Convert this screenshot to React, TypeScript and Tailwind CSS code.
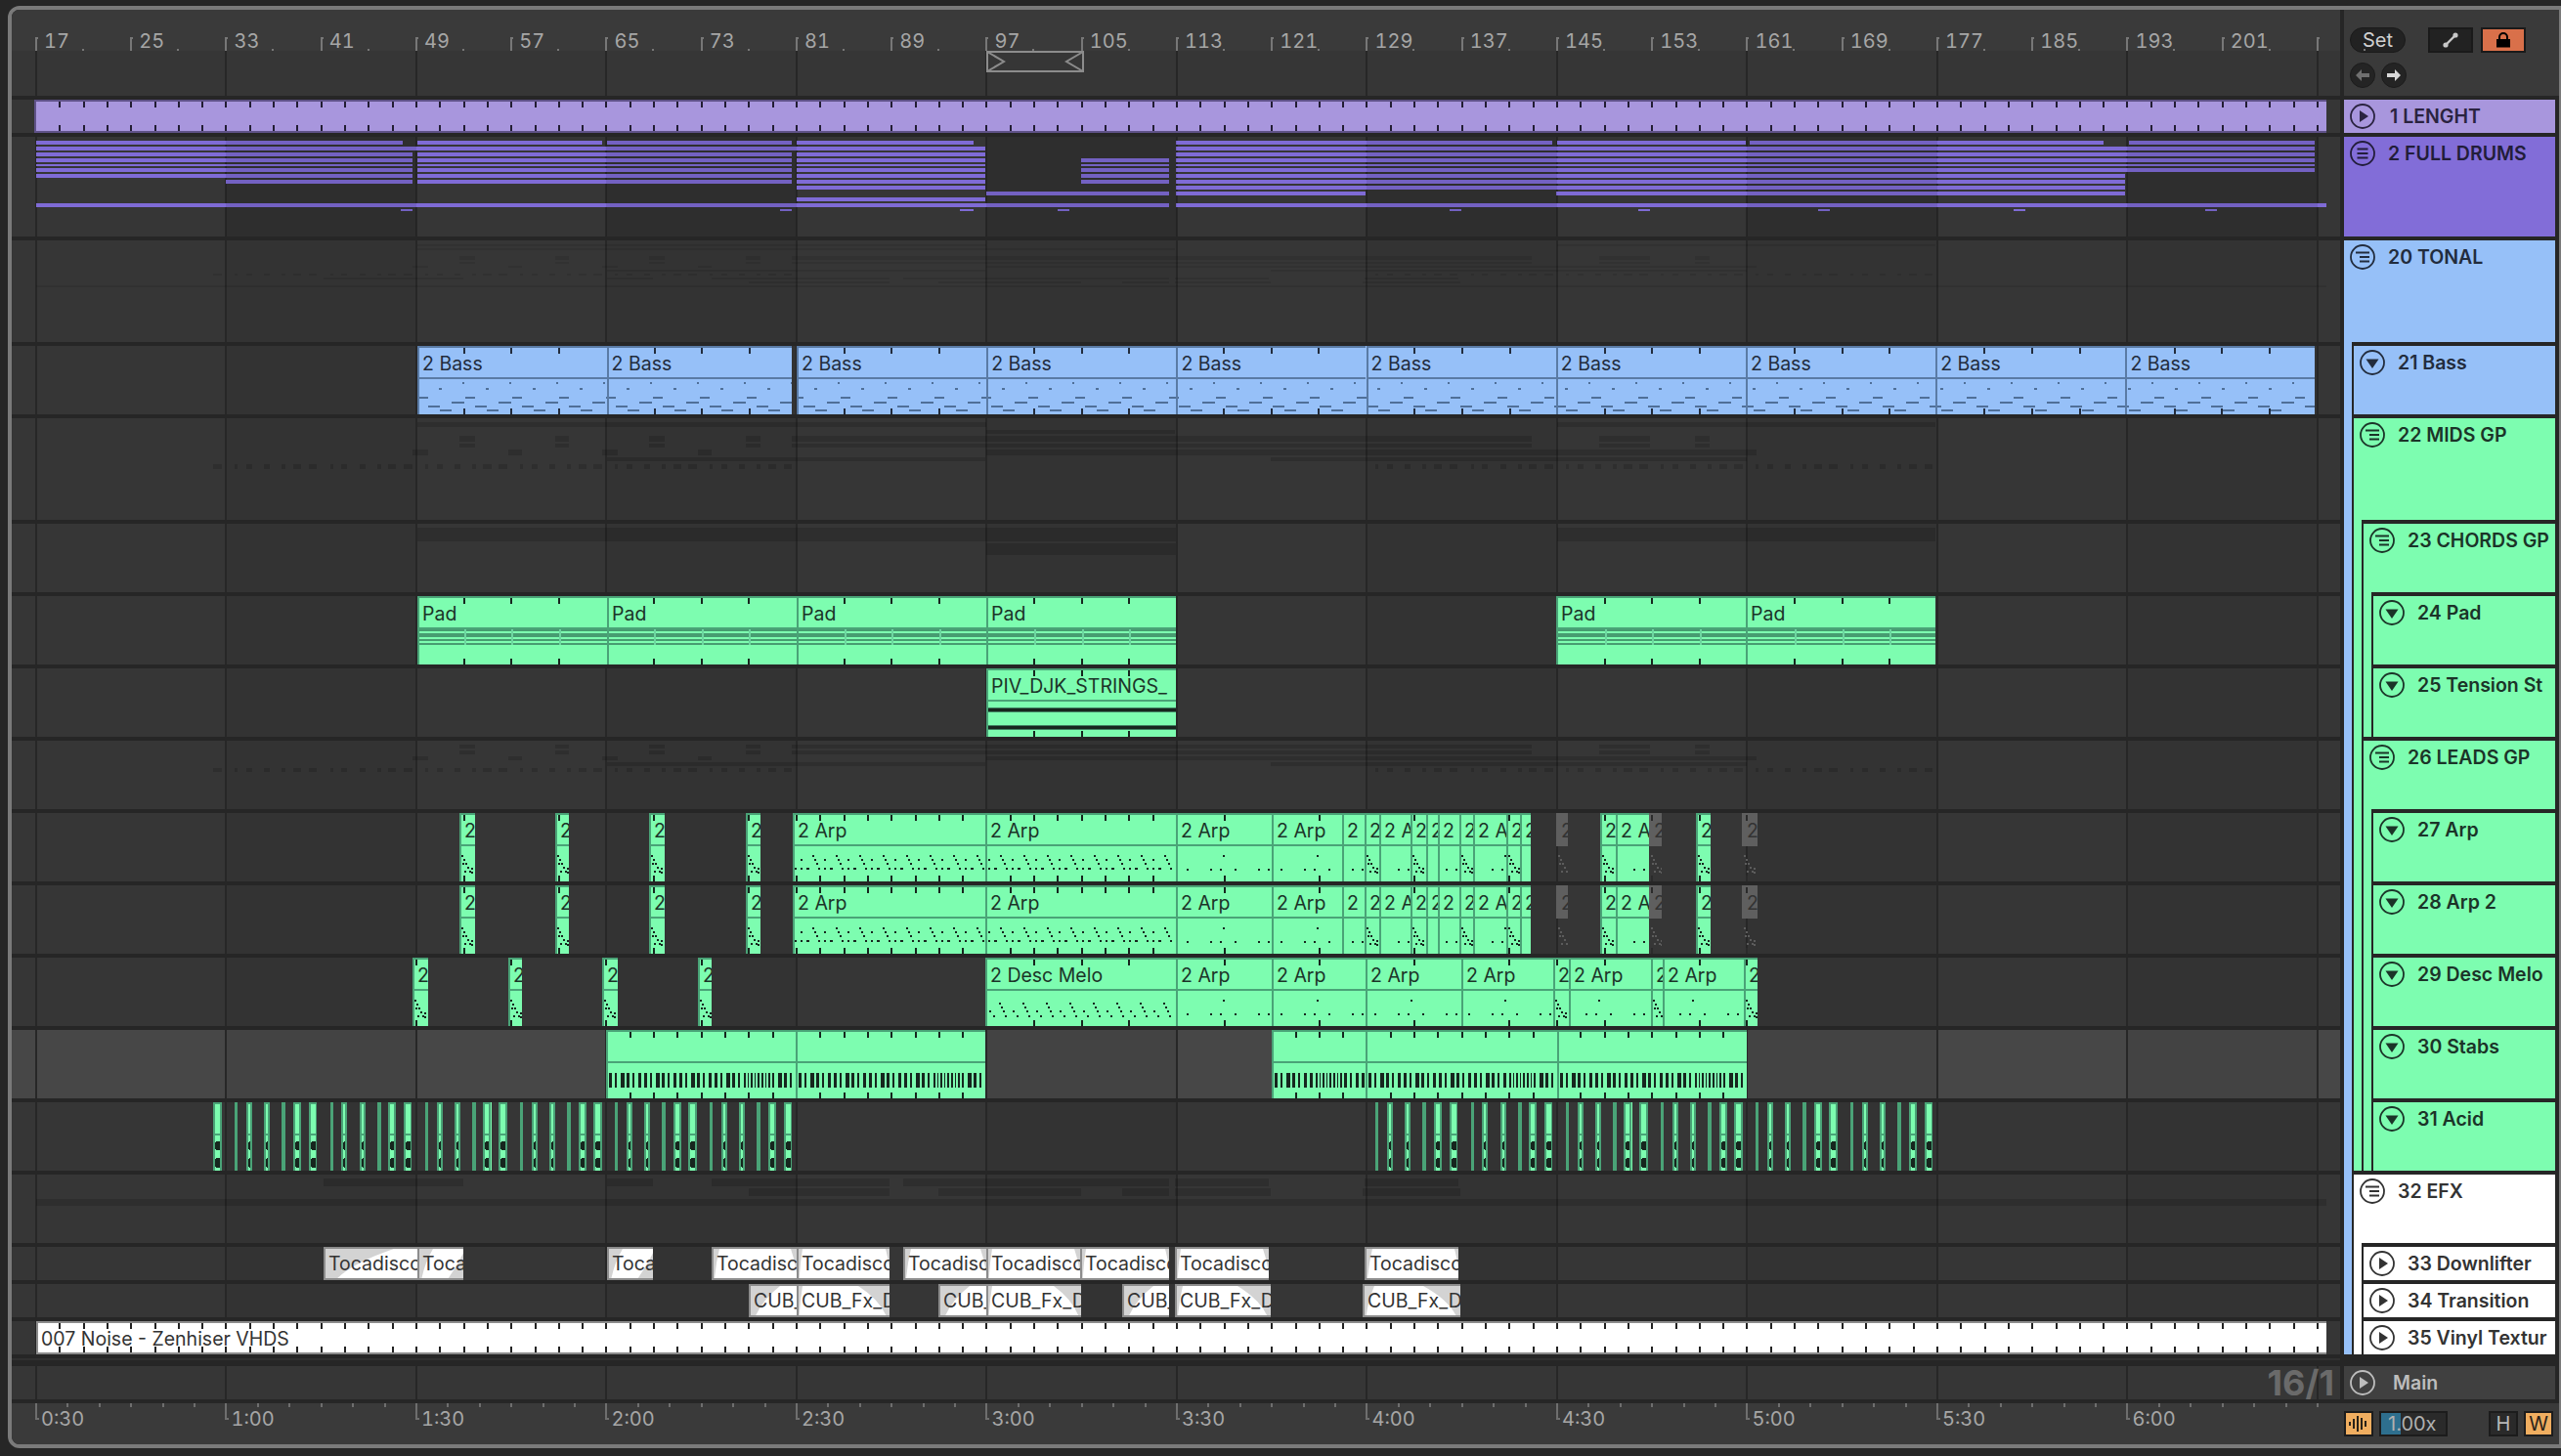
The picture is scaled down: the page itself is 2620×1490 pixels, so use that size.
import React from "react";

const X = (b: number) => 37 + (b - 17) * 12.156;
const range = (a: number, b: number, s: number) => {
  const out: number[] = [];
  for (let v = a; v < b; v += s) out.push(v);
  return out;
};
const SEC = 16 * 12.156;

type Span = [number, number];

const acidBase: Span[] = [[0, 8.7], [22, 25], [33.7, 39.8], [52, 58], [70, 74], [81.6, 89.8]];
const acidSpans = (from: number, to: number, min: number) => {
  const out: Span[] = [];
  for (let s = from; s < to; s += 97.2) {
    for (const [a, b] of acidBase) {
      if (s + b <= to && s + a >= min) out.push([s + a, s + b]);
    }
  }
  return out;
};
const allAcid = [...acidSpans(218.4, 814, 0), ...acidSpans(1385.4, 1982, 1406)];

const THEMES = {
  purple: { bg: "bg-[#a896dd]", text: "text-[#2a2340]", border: "#5f5288", ink: "#221d33", note: "#221d33", sep: "#5f5288" },
  blue: { bg: "bg-[#96c0f8]", text: "text-[#222c3d]", border: "#5a7ba5", ink: "#222c3d", note: "#4f6f98", sep: "#5a7ba5" },
  green: { bg: "bg-[#7dfdb0]", text: "text-[#1b3428]", border: "#4aa377", ink: "#16261e", note: "#16261e", sep: "#4aa377" },
  grey: { bg: "bg-transparent", text: "text-[#333333]", border: "#5f5f5f", ink: "#2b2b2b", note: "#5c5c5c", sep: "#5f5f5f" },
  white: { bg: "bg-[#ffffff]", text: "text-[#333333]", border: "#8c8c8c", ink: "#222222", note: "#222222", sep: "#8c8c8c" },
};
type ThemeKey = keyof typeof THEMES;

function Notes({ kind, x0, x1, h, color }: { kind: string; x0: number; x1: number; h: number; color: string }) {
  const w = x1 - x0;
  const out: React.ReactNode[] = [];
  const rect = (x: number, y: number, rw: number, rh: number, fill = color) =>
    out.push(<rect key={out.length} x={x} y={y} width={rw} height={rh} fill={fill} />);
  if (kind === "bass") {
    for (const s of range(427 - 48 * 12, x1, 48)) {
      const o = s - x0;
      rect(o + 46, 37, 2, 2);
      rect(o + 22, 43, 3, 2);
      rect(o + 1, 52, 10, 2);
      rect(o + 35, 57, 13, 2);
      rect(o + 11, 61, 12, 2);
      rect(o + 23, 65, 12, 2);
    }
  }
  if (kind === "dense") {
    for (const s of range(811 - 24 * 20, x1, 24)) {
      const o = s - x0;
      rect(o + 20, 43, 2, 2);
      rect(o + 22, 47, 2, 2);
      rect(o + 8, 47, 2, 2);
      rect(o + 0, 51, 2, 2);
      rect(o + 2, 56, 2, 2);
      rect(o + 8, 56, 2, 2);
      rect(o + 14, 56, 3, 2);
    }
  }
  if (kind === "melo") {
    for (const s of range(1008 - 24, x1, 24)) {
      const o = s - x0;
      rect(o + 14, 46, 2, 2);
      rect(o + 16, 50, 2, 2);
      rect(o + 18, 54, 2, 2);
      rect(o + 4, 54, 2, 2);
      rect(o + 20, 59, 2, 2);
      rect(o + 8, 59, 2, 2);
    }
  }
  if (kind === "sparse") {
    for (const s of range(1203 - 96, x1, 96)) {
      const o = s - x0;
      rect(o + 48, 43, 2, 2);
      for (const d of [11, 35, 45, 60, 84, 94]) rect(o + d, 57, 2, 2);
    }
  }
  if (kind === "tiny") {
    const pts = [[2, 43], [4, 47], [6, 51], [8, 55], [10, 59], [3, 51], [5, 59], [12, 56], [12, 60]];
    pts.forEach(([a, b]) => rect(a, b, 2, 2));
  }
  if (kind === "pad") {
    rect(0, 32, w, 4, "#479c71");
    rect(0, 38, w, 4, "#479c71");
    rect(0, 44, w, 2, "#479c71");
    rect(0, 48, w, 2, "#479c71");
    for (const b of range(17, 209, 4)) {
      const x = X(b) - x0;
      if (x > 4 && x < w - 1) rect(x, 34, 2, 16, "#6dd6a0");
    }
  }
  if (kind === "strings") {
    rect(0, 40, w, 5, "#3f7f60");
    rect(0, 41, w, 3, "#16261e");
    rect(0, 58, w, 5, "#3f7f60");
    rect(0, 59, w, 3, "#16261e");
  }
  if (kind === "stabs") {
    let x = 3;
    let i = 0;
    while (x < w - 2) {
      const abs = x + x0;
      const inFine = (abs - 620) % 194.5 > 140 && (abs - 620) % 194.5 < 168;
      const bw = inFine ? 1.5 : [3, 2, 4, 3, 2, 3][i % 6];
      rect(x, 44, bw, 15, "#16261e");
      x += inFine ? 3.6 : 6;
      i++;
    }
  }
  if (kind === "acid" && w > 5) {
    const bw = Math.max(3, w * 0.68);
    const bx = 2;
    out.push(<rect key="a" x={bx} y={40} width={bw} height={9} rx={2.5} fill="#16261e" />);
    out.push(<rect key="b" x={bx} y={57} width={bw} height={10} rx={2.5} fill="#16261e" />);
  }
  return <>{out}</>;
}

function Clip({
  x0, x1, label, theme, kind = "none", tick = 2, h = 70, header = true, bottom = false,
}: {
  x0: number; x1: number; label?: string; theme: ThemeKey; kind?: string; tick?: number; h?: number; header?: boolean; bottom?: boolean;
}) {
  const t = THEMES[theme];
  const w = x1 - x0;
  const ticks = tick > 0 ? range(17, 213, tick).map(X).filter((v) => v > x0 + 3 && v < x1 - 1) : [];
  return (
    <div className={`absolute top-0 bottom-0 overflow-hidden ${t.bg}`} style={{ left: x0 - 12, width: w }}>
      <svg className="absolute inset-0" width={w} height={h} shapeRendering="crispEdges">
        {theme === "grey" && <rect x={0} y={0} width={w} height={34} fill="#5f5f5f" />}
        <Notes kind={kind} x0={x0} x1={x1} h={h} color={t.note} />
        {theme !== "grey" && <rect x={0} y={0} width={w} height={2} fill={t.border} />}
        {theme !== "grey" && <rect x={0} y={0} width={2} height={h} fill={t.border} />}
        {kind === "acid" && <rect x={w - 2} y={0} width={2} height={h} fill={t.border} />}
        {header && theme !== "grey" && <rect x={0} y={32} width={w} height={2} fill={t.sep} />}
        {bottom && <rect x={0} y={h - 2} width={w} height={2} fill={t.border} />}
        {ticks.map((v) => (
          <g key={v}>
            <rect x={v - x0 - 1} y={2} width={2} height={6} fill={t.ink} />
            <rect x={v - x0 - 1} y={h - (bottom ? 8 : 6)} width={2} height={6} fill={t.ink} />
          </g>
        ))}
      </svg>
      {label && (
        <div className={`absolute left-[5px] top-0 text-[19.5px] leading-[36px] whitespace-nowrap ${t.text}`}>{label}</div>
      )}
    </div>
  );
}

function AudioClip({ x0, x1, label, fadeIn, fadeOut, low }: { x0: number; x1: number; label: string; fadeIn: number; fadeOut: number; low?: boolean }) {
  const w = x1 - x0;
  const h = 34;
  return (
    <div className="absolute top-0 bottom-0 overflow-hidden bg-[#ffffff] border-t-2 border-l-2 border-b-2 border-[#8c8c8c]" style={{ left: x0 - 12, width: w }}>
      <svg className="absolute inset-0" width={w} height={h}>
        <path d={`M0 0 L${fadeIn} 0 Q${fadeIn * 0.35} ${h * 0.45} ${fadeIn * 0.12} ${h} L0 ${h} Z`} fill="#d3d3d3" />
        {low ? (
          <path d={`M${w} ${h} L${w - fadeOut} ${h} Q${w - fadeOut * 0.35} ${h * 0.45} ${w} 0 Z`} fill="#d3d3d3" />
        ) : (
          <path d={`M${w - fadeOut} 0 L${w} 0 L${w} ${h} L${w - fadeOut * 0.12} ${h} Q${w - fadeOut * 0.3} ${h * 0.45} ${w - fadeOut} 0 Z`} fill="#d3d3d3" />
        )}
      </svg>
      <div className="absolute left-[3px] top-0 text-[19.5px] leading-[30px] whitespace-nowrap text-[#333333]">{label}</div>
    </div>
  );
}

function Ghost({ rows, h, color = "#000000", opacity = 0.14 }: { rows: [number, number, Span[]][]; h: number; color?: string; opacity?: number }) {
  return (
    <svg className="absolute inset-0" width={2382} height={h} shapeRendering="crispEdges">
      {rows.map(([y, rh, spans], i) =>
        spans.map(([a, b], j) => <rect key={`${i}-${j}`} x={a - 12} y={y} width={b - a} height={rh} fill={color} fillOpacity={opacity} />),
      )}
    </svg>
  );
}

const sections = range(0, 12, 1);

function Lane({ h, light, children }: { h: number; light?: boolean; children?: React.ReactNode }) {
  return (
    <div className={`relative overflow-hidden ${light ? "bg-[#474747]" : "bg-[#363636]"}`} style={{ height: h }}>
      {sections.filter((k) => k % 2 === 1).map((k) => (
        <div key={k} className="absolute top-0 bottom-0 bg-[#000000]/5" style={{ left: X(17 + k * 16) - 12, width: SEC }} />
      ))}
      {sections.concat([12]).map((k) => (
        <div key={k} className="absolute top-0 bottom-0 w-[2px] bg-[#272727]" style={{ left: X(17 + k * 16) - 13 }} />
      ))}
      {children}
    </div>
  );
}

function Icon({ type }: { type: "play" | "menu" | "group" | "down" }) {
  return (
    <svg width={26} height={26} viewBox="0 0 26 26" className="shrink-0" fill="none" stroke="currentColor" strokeWidth={1.8}>
      <circle cx={13} cy={13} r={12} />
      {type === "play" && <path d="M10 7 L19 13 L10 19 Z" fill="currentColor" stroke="none" />}
      {type === "down" && <path d="M6.5 9.5 H19.5 L13 19 Z" fill="currentColor" stroke="none" />}
      {type === "menu" && (
        <g strokeWidth={2}>
          <path d="M7.5 8.5 H18.5" />
          <path d="M7.5 13 H18.5" />
          <path d="M7.5 17.5 H18.5" />
        </g>
      )}
      {type === "group" && (
        <g strokeWidth={2}>
          <path d="M6 8.5 H20" />
          <path d="M10 13 H20" />
          <path d="M10 17.5 H20" />
        </g>
      )}
    </svg>
  );
}

function Head({ label, icon, h, cls, textCls = "ml-[13px]" }: { label: string; icon: "play" | "menu" | "group" | "down"; h: number; cls: string; textCls?: string }) {
  return (
    <div className={`flex items-start pl-[6px] pt-[4px] overflow-hidden ${cls}`} style={{ height: h }}>
      <Icon type={icon} />
      <div className={`text-[19.5px] leading-[26px] font-semibold whitespace-nowrap ${textCls}`}>{label}</div>
    </div>
  );
}

const Kids = ({ children }: { children: React.ReactNode }) => (
  <div className="ml-[8px] border-l-2 border-[#262626] bg-[#262626] flex flex-col gap-[4px] pt-[4px]">{children}</div>
);

const BLUE = "bg-[#96c0f8] text-[#222c3d]";
const GREEN = "bg-[#7dfdb0] text-[#1b3428]";
const WHITE = "bg-[#ffffff] text-[#333333]";

const tinyArp: Span[] = [[470, 486], [568, 582], [664, 680], [763, 778]];
const tinyMelo: Span[] = [[422, 438], [520, 534], [616, 632], [714, 728]];
const toca: [number, number, number, number, boolean?][] = [
  [331, 427, 70, 0], [427, 474, 14, 20, true], [621, 668, 14, 20, true], [728, 815, 6, 8], [815, 910, 4, 6],
  [924, 1009, 6, 8], [1009, 1105, 4, 8], [1105, 1196, 4, 6], [1202, 1298, 4, 8], [1396, 1492, 6, 6],
];
const cub: [number, number, number, number, boolean?][] = [
  [766, 815, 30, 0], [815, 910, 4, 34], [960, 1009, 30, 0], [1009, 1106, 4, 30], [1148, 1196, 30, 0],
  [1202, 1300, 6, 36], [1394, 1494, 10, 40],
];
const tocaSpans: Span[] = toca.map((t) => [t[0], t[1]]);
const cubSpans: Span[] = cub.map((t) => [t[0], t[1]]);

const arpClips: [number, number, string, ThemeKey, string][] = [
  [470, 486, "2", "green", "tiny"], [568, 582, "2", "green", "tiny"], [664, 680, "2", "green", "tiny"], [763, 778, "2", "green", "tiny"],
  [811, 1008, "2 Arp", "green", "dense"], [1008, 1203, "2 Arp", "green", "dense"],
  [1203, 1301, "2 Arp", "green", "sparse"], [1301, 1373, "2 Arp", "green", "sparse"], [1373, 1396, "2", "green", "sparse"],
  [1396, 1411, "2", "green", "tiny"], [1411, 1443, "2 Arp", "green", "sparse"], [1443, 1459, "2", "green", "tiny"],
  [1459, 1471, "2", "green", "none"], [1471, 1493, "2", "green", "sparse"], [1493, 1507, "2", "green", "tiny"],
  [1507, 1541, "2 Arp", "green", "sparse"], [1541, 1555, "2", "green", "tiny"], [1555, 1566, "2", "green", "none"],
  [1592, 1604, "2", "grey", "tiny"], [1637, 1653, "2", "green", "tiny"], [1653, 1687, "2 Arp", "green", "sparse"],
  [1687, 1700, "2", "grey", "tiny"], [1735, 1750, "2", "green", "tiny"], [1782, 1798, "2", "grey", "tiny"],
];
const meloClips: [number, number, string, string][] = [
  [422, 438, "2", "tiny"], [520, 534, "2", "tiny"], [616, 632, "2", "tiny"], [714, 728, "2", "tiny"],
  [1008, 1203, "2 Desc Melo", "melo"], [1203, 1301, "2 Arp", "sparse"], [1301, 1397, "2 Arp", "sparse"], [1397, 1495, "2 Arp", "sparse"],
  [1495, 1589, "2 Arp", "sparse"], [1589, 1605, "2", "tiny"], [1605, 1689, "2 Arp", "sparse"], [1689, 1701, "2", "tiny"],
  [1701, 1784, "2 Arp", "sparse"], [1784, 1798, "2", "tiny"],
];

const D: [number, number, Span[]][] = [
  [4, 4, [[37, 412], [427, 616], [621, 810], [815, 996], [1203, 1588], [1593, 1786], [1790, 2152], [2178, 2368]]],
  [10, 4, [[37, 1008], [1203, 2368]]],
  [16, 4, [[37, 422], [427, 810], [815, 1008], [1203, 2368]]],
  [22, 4, [[37, 422], [427, 810], [815, 1008], [1106, 1196], [1203, 2368]]],
  [28, 2, [[37, 422], [427, 810], [815, 1008], [1106, 1196], [1203, 2368]]],
  [32, 4, [[37, 422], [427, 810], [815, 1008], [1106, 1196], [1203, 2368]]],
  [38, 4, [[37, 422], [427, 810], [815, 1008], [1106, 1196], [1203, 2174]]],
  [44, 4, [[231, 422], [427, 810], [815, 1008], [1106, 1196], [1203, 2174]]],
  [50, 4, [[815, 1008], [1203, 2174]]],
  [56, 4, [[1009, 1196], [1203, 1397], [1592, 2174]]],
  [62, 4, [[815, 1008]]],
  [68, 4, [[37, 1196], [1203, 2380]]],
  [74, 2, [[410, 422], [798, 810], [982, 996], [1082, 1094], [1483, 1495], [1676, 1688], [1860, 1872], [2060, 2072], [2256, 2268]]],
];

const midsRows: [number, number, Span[]][] = [
  [4, 5, [[427, 1009], [1593, 1980]]],
  [12, 4, [[1009, 1202]]],
  [18, 6, [...tinyArp, [810, 1567], [1636, 1688], [1734, 1749]]],
  [26, 4, [...tinyArp, [810, 1567], [1636, 1688], [1734, 1749]]],
  [32, 6, [...tinyMelo, [1009, 1797]]],
  [40, 4, [[621, 1008], [1300, 1787]]],
  [47, 5, allAcid],
];
const chordsRows: [number, number, Span[]][] = [
  [4, 14, [[427, 1203], [1593, 1980]]],
  [20, 12, [[1009, 1203]]],
];
const leadsRows: [number, number, Span[]][] = [
  [4, 4, [...tinyArp, [810, 1567], [1636, 1688], [1734, 1749]]],
  [10, 4, [...tinyArp, [810, 1567], [1636, 1688], [1734, 1749]]],
  [16, 4, [...tinyMelo, [1009, 1797]]],
  [22, 4, [[621, 1008], [1300, 1787]]],
  [28, 4, allAcid],
];
const tonalRows: [number, number, Span[]][] = [
  [4, 2, [[427, 1009], [1593, 1980]]],
  [8, 2, [[427, 1202]]],
  [16, 4, [...tinyArp, [810, 1567], [1636, 1688], [1734, 1749]]],
  [22, 2, [...tinyArp, [810, 1567], [1636, 1688], [1734, 1749]]],
  [26, 2, [...tinyMelo, [1009, 1797]]],
  [30, 2, [[621, 1008], [1300, 1787]]],
  [34, 2, allAcid],
  [38, 2, tocaSpans],
  [42, 2, cubSpans],
  [46, 2, [[37, 2380]]],
];

const Circ = ({ children }: { children: React.ReactNode }) => (
  <div className="w-[26px] h-[26px] rounded-full bg-[#242424] border border-[#1c1c1c] flex items-center justify-center">{children}</div>
);

export default function App() {
  const bass = [427, 620.6, 810];
  const bassRest = range(0, 8, 1).map((k) => 815 + k * 194.2);
  const padX: Span[] = [[427, 621], [621, 815], [815, 1009], [1009, 1203], [1592, 1786], [1786, 1980]];
  const stabs: Span[] = [[620, 814], [814, 1008], [1301, 1397], [1397, 1593], [1593, 1787]];
  return (
    <div className="w-[2620px] h-[1490px] bg-[#262626] overflow-hidden pt-[6px] pl-[8px] [font-family:Inter,sans-serif] select-none">
      <div className="w-[2614px] h-[1476px] border-4 border-[#7a7a7a] rounded-l-[12px] bg-[#262626] overflow-hidden flex flex-col">
        {/* top ruler + controls */}
        <div className="flex h-[88px] gap-[4px] shrink-0">
          <div className="w-[2382px] relative bg-[#363636]">
            <div className="h-[42px] bg-[#3a3a3a] relative" />
            {sections.concat([12]).map((k) => (
              <div key={k} className="absolute top-[42px] bottom-0 w-[2px] bg-[#272727]" style={{ left: X(17 + k * 16) - 13 }} />
            ))}
            {range(17, 210, 8).map((b) => (
              <div key={b} className="absolute top-[20px]" style={{ left: X(b) - 13 }}>
                <div className="absolute top-[8px] left-0 w-[2px] h-[14px] bg-[#777777]" />
                <div className="absolute top-[8px] left-0 w-[3px] h-[2px] bg-[#777777]" />
                {b < 209 && (
                  <div className="absolute left-[9px] top-0 text-[20px] leading-[24px] tabular-nums text-[#a6a6a6]">{b}</div>
                )}
                <div className="absolute top-[20px] w-[2px] h-[2px] bg-[#777777]" style={{ left: 48 }} />
              </div>
            ))}
            <svg className="absolute" style={{ left: X(97) - 12, top: 42 }} width={100} height={22} fill="none" stroke="#8c8c8c" strokeWidth={2}>
              <rect x={1} y={1} width={98} height={20} />
              <path d="M1 1 L18 11 L1 21" />
              <path d="M99 1 L82 11 L99 21" />
            </svg>
          </div>
          <div className="flex-1 bg-[#3a3a3a] pl-[6px] pt-[18px]">
            <div className="flex items-center">
              <div className="w-[57px] h-[26px] rounded-full bg-[#222222] border border-[#1a1a1a] text-[#d0d0d0] text-[20px] leading-[24px] text-center">Set</div>
              <div className="ml-[23px] w-[46px] h-[26px] bg-[#222222] border-2 border-[#1a1a1a] flex items-center justify-center">
                <svg width={16} height={16} viewBox="0 0 16 16">
                  <path d="M3 13 L13 3" stroke="#c8c8c8" strokeWidth={2.4} />
                  <circle cx={3} cy={13} r={2.6} fill="#c8c8c8" />
                  <circle cx={13} cy={3} r={2.6} fill="#c8c8c8" />
                </svg>
              </div>
              <div className="ml-[8px] w-[46px] h-[26px] bg-[#d9704a] border-2 border-[#1a1a1a] flex items-center justify-center">
                <svg width={16} height={16} viewBox="0 0 16 16">
                  <path d="M4 7 V5 A4 4 0 0 1 12 5 V7" fill="none" stroke="#000000" strokeWidth={2} />
                  <rect x={1} y={7} width={14} height={8.5} fill="#000000" />
                </svg>
              </div>
            </div>
            <div className="flex gap-[6px] mt-[10px]">
              <Circ>
                <svg width={16} height={14} viewBox="0 0 16 14"><path d="M1 7 L7 1 V5 H15 V9 H7 V13 Z" fill="#6f6f6f" /></svg>
              </Circ>
              <Circ>
                <svg width={16} height={14} viewBox="0 0 16 14"><path d="M15 7 L9 1 V5 H1 V9 H9 V13 Z" fill="#d8d8d8" /></svg>
              </Circ>
            </div>
          </div>
        </div>

        {/* tracks */}
        <div className="flex gap-[4px] pt-[4px] shrink-0">
          <div className="w-[2382px] flex flex-col gap-[4px]">
            <Lane h={34}>
              <Clip x0={35} x1={2380} theme="purple" tick={2} h={34} header={false} bottom />
            </Lane>
            <Lane h={102}>
              <svg className="absolute inset-0" width={2382} height={102} shapeRendering="crispEdges">
                {D.map(([y, rh, spans], i) =>
                  spans.map(([a, b], j) => <rect key={`${i}-${j}`} x={a - 12} y={y} width={b - a} height={rh} fill="#7f6bd6" />),
                )}
                {sections.filter((k) => k % 2 === 1).map((k) => (
                  <rect key={k} x={X(17 + k * 16) - 12} y={0} width={SEC} height={102} fill="#000000" fillOpacity={0.09} />
                ))}
              </svg>
            </Lane>
            <Lane h={104}>
              <Ghost rows={tonalRows} h={104} opacity={0.09} />
            </Lane>
            <Lane h={70}>
              {bass.slice(0, 2).map((x, i) => (
                <Clip key={x} x0={x} x1={i === 0 ? 620.6 : 810} label="2 Bass" theme="blue" kind="bass" tick={4} />
              ))}
              {bassRest.map((x, i) => (
                <Clip key={x} x0={x} x1={i === 7 ? 2368 : x + 194.2} label="2 Bass" theme="blue" kind="bass" tick={4} />
              ))}
            </Lane>
            <Lane h={104}>
              <Ghost rows={midsRows} h={104} />
            </Lane>
            <Lane h={70}>
              <Ghost rows={chordsRows} h={70} />
            </Lane>
            <Lane h={70}>
              {padX.map(([a, b]) => (
                <Clip key={a} x0={a} x1={b} label="Pad" theme="green" kind="pad" tick={4} />
              ))}
            </Lane>
            <Lane h={70}>
              <Clip x0={1009} x1={1203} label="PIV_DJK_STRINGS_" theme="green" kind="strings" tick={4} />
            </Lane>
            <Lane h={70}>
              <Ghost rows={leadsRows} h={70} />
            </Lane>
            {[0, 1].map((r) => (
              <Lane h={70} key={r}>
                {arpClips.map(([a, b, l, t, k]) => (
                  <Clip key={a} x0={a} x1={b} label={l} theme={t} kind={k} tick={a >= 1203 ? 4 : 2} />
                ))}
              </Lane>
            ))}
            <Lane h={70}>
              {meloClips.map(([a, b, l, k]) => (
                <Clip key={a} x0={a} x1={b} label={l} theme="green" kind={k} tick={a >= 811 ? 4 : 2} />
              ))}
            </Lane>
            <Lane h={70} light>
              {stabs.map(([a, b]) => (
                <Clip key={a} x0={a} x1={b} theme="green" kind="stabs" tick={2} />
              ))}
            </Lane>
            <Lane h={70}>
              {allAcid.map(([a, b]) => (
                <Clip key={a} x0={a} x1={b} theme="green" kind="acid" tick={0} />
              ))}
            </Lane>
            <Lane h={70}>
              <Ghost
                rows={[
                  [4, 8, tocaSpans],
                  [14, 8, cubSpans],
                  [25, 7, [[37, 2380]]],
                ]}
                h={70}
              />
            </Lane>
            <Lane h={34}>
              {toca.map(([a, b, i, o, low]) => (
                <AudioClip key={a} x0={a} x1={b} label="Tocadiscos" fadeIn={i} fadeOut={o} low={low} />
              ))}
            </Lane>
            <Lane h={34}>
              {cub.map(([a, b, i, o, low]) => (
                <AudioClip key={a} x0={a} x1={b} label="CUB_Fx_Down" fadeIn={i} fadeOut={o} low={low} />
              ))}
            </Lane>
            <Lane h={34}>
              <Clip x0={37} x1={2380} theme="white" tick={2} h={34} header={false} label="007 Noise - Zenhiser VHDS" bottom />
            </Lane>
          </div>

          <div className="w-[216px] flex flex-col gap-[4px]">
            <Head label="1 LENGHT" icon="play" h={34} cls="bg-[#a896dd] text-[#2a2340]" textCls="ml-[15px]" />
            <Head label="2 FULL DRUMS" icon="menu" h={102} cls="bg-[#826dd8] text-[#221d3a]" />
            <div className={BLUE}>
              <Head label="20 TONAL" icon="group" h={104} cls={BLUE} />
              <Kids>
                <Head label="21 Bass" icon="down" h={70} cls={BLUE} />
                <div className={GREEN}>
                  <Head label="22 MIDS GP" icon="group" h={104} cls={GREEN} />
                  <Kids>
                    <div className={GREEN}>
                      <Head label="23 CHORDS GP" icon="group" h={70} cls={GREEN} />
                      <Kids>
                        <Head label="24 Pad" icon="down" h={70} cls={GREEN} />
                        <Head label="25 Tension St" icon="down" h={70} cls={GREEN} />
                      </Kids>
                    </div>
                    <div className={GREEN}>
                      <Head label="26 LEADS GP" icon="group" h={70} cls={GREEN} />
                      <Kids>
                        <Head label="27 Arp" icon="down" h={70} cls={GREEN} />
                        <Head label="28 Arp 2" icon="down" h={70} cls={GREEN} />
                        <Head label="29 Desc Melo" icon="down" h={70} cls={GREEN} />
                        <Head label="30 Stabs" icon="down" h={70} cls={GREEN} />
                        <Head label="31 Acid" icon="down" h={70} cls={GREEN} />
                      </Kids>
                    </div>
                  </Kids>
                </div>
                <div className={WHITE}>
                  <Head label="32 EFX" icon="group" h={70} cls={WHITE} />
                  <Kids>
                    <Head label="33 Downlifter" icon="play" h={34} cls={WHITE} />
                    <Head label="34 Transition" icon="play" h={34} cls={WHITE} />
                    <Head label="35 Vinyl Textur" icon="play" h={34} cls={WHITE} />
                  </Kids>
                </div>
              </Kids>
            </div>
          </div>
        </div>

        {/* divider */}
        <div className="h-[12px] shrink-0 pt-[4px]">
          <div className="h-[2px] w-[2382px] bg-[#303030]" />
        </div>

        {/* master */}
        <div className="flex gap-[4px] shrink-0">
          <div className="w-[2382px] h-[34px] relative bg-[#363636] overflow-hidden flex items-center justify-end pr-[6px]">
            {sections.concat([12]).map((k) => (
              <div key={k} className="absolute top-0 bottom-0 w-[2px] bg-[#272727]" style={{ left: X(17 + k * 16) - 13 }} />
            ))}
            <div className="relative text-[36px] leading-[34px] font-bold text-[#6a6a6a]">16/1</div>
          </div>
          <div className="w-[216px]">
            <Head label="Main" icon="play" h={34} cls="bg-[#404040] text-[#bdbdbd]" textCls="ml-[18px]" />
          </div>
        </div>

        {/* bottom ruler */}
        <div className="mt-[4px] flex-1 flex gap-[4px] bg-[#3a3a3a]">
          <div className="w-[2382px] relative">
            {range(0, 73, 1).map((i) => (
              <div key={i} className="absolute top-0 w-[2px] h-[4px] bg-[#6e6e6e]" style={{ left: 24 + (i * SEC) / 6 }} />
            ))}
            {range(0, 12, 1).map((k) => {
              const sec = 30 + k * 30;
              const txt = `${Math.floor(sec / 60)}:${sec % 60 === 0 ? "00" : "30"}`;
              return (
                <div key={k} className="absolute top-0" style={{ left: 24 + k * SEC }}>
                  <div className="absolute left-0 top-0 w-[2px] h-[17px] bg-[#6e6e6e]" />
                  <div className="absolute left-0 top-[15px] w-[4px] h-[2px] bg-[#6e6e6e]" />
                  <div className="absolute left-[6px] top-[4px] text-[20px] leading-[24px] tabular-nums text-[#a6a6a6]">{txt}</div>
                </div>
              );
            })}
          </div>
          <div className="flex-1 flex items-start pt-[8px] pr-[6px]">
            <div className="w-[30px] h-[26px] bg-[#f0ae60] border-2 border-[#1c1c1c] flex items-center justify-center">
              <svg width={22} height={18} viewBox="0 0 22 18" stroke="#2a2218" strokeWidth={2}>
                <path d="M2 7 V11 M6 4 V14 M10 1 V17 M14 3 V15 M18 6 V12" />
              </svg>
            </div>
            <div className="ml-[6px] w-[70px] h-[26px] bg-[#2a2a2a] border-2 border-[#1c1c1c] relative">
              <div className="absolute left-0 top-0 bottom-0 w-[20px] bg-[#2e6f8e]" />
              <div className="relative text-[20px] leading-[22px] pl-[7px] text-[#b0b0b0]">1.00x</div>
            </div>
            <div className="ml-auto w-[30px] h-[26px] bg-[#2a2a2a] border-2 border-[#1c1c1c] text-[20px] leading-[22px] text-center text-[#b8b8b8]">H</div>
            <div className="ml-[6px] w-[30px] h-[26px] bg-[#f0ae60] border-2 border-[#1c1c1c] text-[20px] leading-[22px] text-center text-[#2a2218]">W</div>
          </div>
        </div>
      </div>
    </div>
  );
}
